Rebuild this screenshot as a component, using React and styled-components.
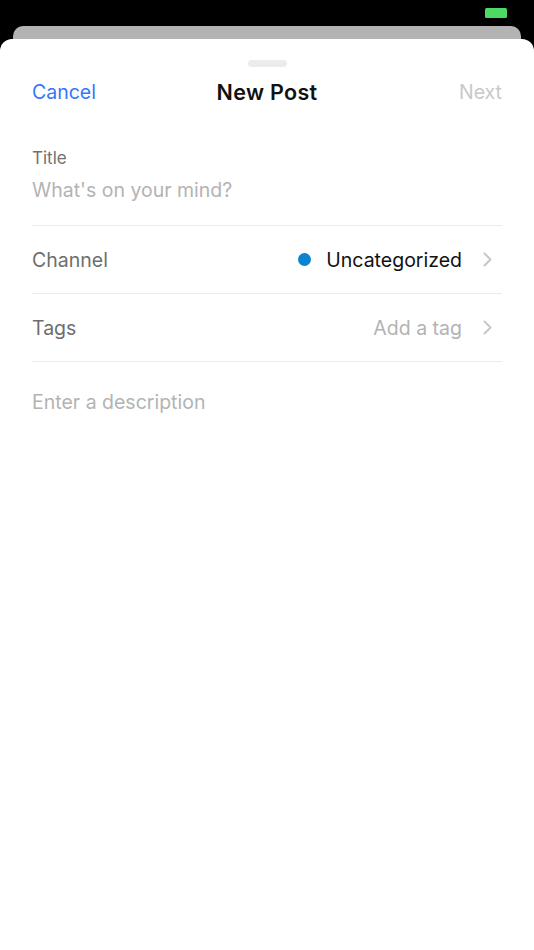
import styled, { createGlobalStyle } from "styled-components";

const GlobalStyle = createGlobalStyle`
  html, body {
    margin: 0;
    padding: 0;
    background: #000;
    font-family: Inter, "Noto Sans", sans-serif;
    -webkit-font-smoothing: antialiased;
  }
  #root {
    min-height: 100vh;
    display: flex;
    flex-direction: column;
  }
`;

const StatusBar = styled("div")`
  height: 26px;
  display: flex;
  justify-content: flex-end;
  align-items: flex-start;
  padding: 8px 27px 0 0;
  box-sizing: border-box;
`;

const Battery = styled("div")`
  width: 22px;
  height: 10px;
  border-radius: 1.5px;
  background: #4cd964;
`;

const BehindCard = styled("div")`
  height: 13px;
  margin: 0 13px;
  background: #b3b3b3;
  border-radius: 10px 10px 0 0;
`;

const Sheet = styled("main")`
  flex: 1;
  background: #fff;
  border-radius: 12px 12px 0 0;
  padding: 21px 32px 0;
  display: flex;
  flex-direction: column;
`;

const Handle = styled("div")`
  align-self: center;
  width: 39px;
  height: 7px;
  border-radius: 4px;
  background: #ececec;
`;

const Header = styled("header")`
  height: 44px;
  margin-top: 3px;
  display: grid;
  grid-template-columns: 1fr auto 1fr;
  align-items: center;
`;

const HeaderButton = styled("button")`
  border: none;
  background: none;
  padding: 0;
  font: inherit;
  font-size: 19.5px;
  color: ${({ $disabled }) => ($disabled ? "#c9c9c9" : "#3478f6")};
  justify-self: ${({ $end }) => ($end ? "end" : "start")};
`;

const HeaderTitle = styled("h1")`
  margin: 0;
  font-size: 21.5px;
  font-weight: 600;
  letter-spacing: 0.3px;
  color: #111;
`;

const TitleField = styled("div")`
  display: flex;
  flex-direction: column;
  gap: 10px;
  padding: 34px 0 23px;
  border-bottom: 1px solid #ebebeb;
`;

const Label = styled("label")`
  font-size: 17px;
  line-height: 20px;
  color: #707070;
`;

const Placeholder = styled("div")`
  font-size: 19.5px;
  line-height: 24px;
  color: #b3b3b3;
`;

const Row = styled("div")`
  height: 67px;
  display: flex;
  align-items: center;
  border-bottom: 1px solid #ebebeb;
`;

const RowLabel = styled("span")`
  flex: 1;
  font-size: 19.5px;
  color: #6e6e6e;
`;

const RowValue = styled("span")`
  display: flex;
  align-items: center;
  gap: 15px;
  font-size: 19.5px;
  color: ${({ $muted }) => ($muted ? "#b3b3b3" : "#111")};
`;

const Dot = styled("span")`
  width: 13px;
  height: 13px;
  border-radius: 50%;
  background: #0a84d0;
`;

const Chevron = styled("svg")`
  margin-left: 21px;
  margin-right: 10px;
`;

const Description = styled("div")`
  padding-top: 28px;
  font-size: 19.5px;
  line-height: 24px;
  color: #b3b3b3;
`;

const ChevronIcon = () => (
  <Chevron width="9" height="15" viewBox="0 0 9 15" fill="none">
    <path d="M1.5 1.5 L7.5 7.5 L1.5 13.5" stroke="#c7c7cc" strokeWidth="2" strokeLinecap="round" strokeLinejoin="round" />
  </Chevron>
);

const App = () => {
  return (
    <>
      <GlobalStyle />
      <StatusBar>
        <Battery />
      </StatusBar>
      <BehindCard />
      <Sheet>
        <Handle />
        <Header>
          <HeaderButton>Cancel</HeaderButton>
          <HeaderTitle>New Post</HeaderTitle>
          <HeaderButton $disabled $end>Next</HeaderButton>
        </Header>
        <TitleField>
          <Label>Title</Label>
          <Placeholder>What's on your mind?</Placeholder>
        </TitleField>
        <Row>
          <RowLabel>Channel</RowLabel>
          <RowValue>
            <Dot />
            Uncategorized
          </RowValue>
          <ChevronIcon />
        </Row>
        <Row>
          <RowLabel>Tags</RowLabel>
          <RowValue $muted>Add a tag</RowValue>
          <ChevronIcon />
        </Row>
        <Description>Enter a description</Description>
      </Sheet>
    </>
  );
};

export default App;
